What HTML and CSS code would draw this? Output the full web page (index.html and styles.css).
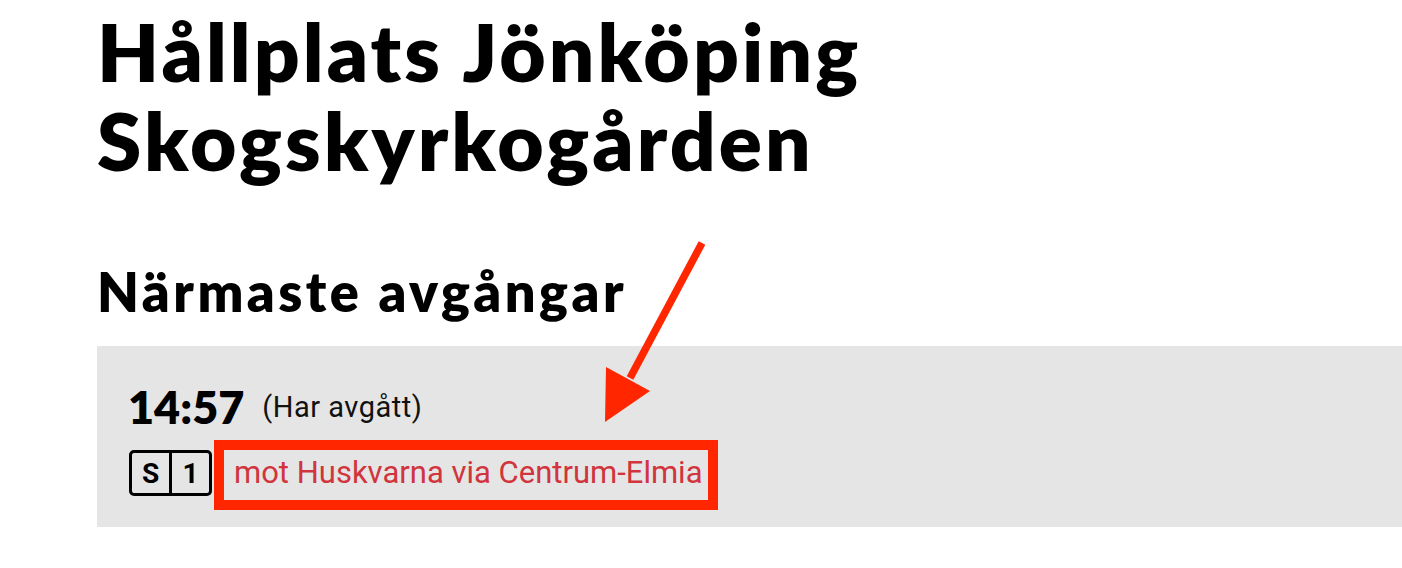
FILE: index.html
```html
<!DOCTYPE html>
<html lang="sv">
<head>
<meta charset="utf-8">
<title>Hållplats Jönköping Skogskyrkogården</title>
<link rel="stylesheet" href="styles.css">
</head>
<body>
<main class="page">
  <h1 class="title">Hållplats Jönköping<br>Skogskyrkogården</h1>
  <h2 class="subtitle">Närmaste avgångar</h2>
  <section class="departure">
    <div class="departure-time">
      <span class="time">14:57</span>
      <span class="status">(Har avgått)</span>
    </div>
    <div class="departure-line">
      <span class="badge"><span class="badge-cell">S</span><span class="badge-cell">1</span></span>
      <a class="destination" href="#">mot Huskvarna via Centrum-Elmia</a>
    </div>
    <span class="highlight"></span>
  </section>
</main>
<svg class="arrow" width="1402" height="568" viewBox="0 0 1402 568" aria-hidden="true">
  <line x1="702" y1="243" x2="630" y2="378" stroke="#ff2600" stroke-width="7.5"/>
  <polygon points="606,367 650,391 605,422" fill="#ff2600"/>
</svg>
</body>
</html>
```

FILE: styles.css
```css
html, body {
  margin: 0;
  padding: 0;
  background: #ffffff;
}

body {
  position: relative;
  width: 1402px;
  height: 568px;
  overflow: hidden;
  font-family: "Lato", "Liberation Sans", sans-serif;
  color: #000;
}

.page {
  padding-left: 97px;
}

.title {
  margin: 7px 0 0 0;
  font-family: "Lato", sans-serif;
  font-weight: 800;
  font-size: 80px;
  line-height: 89px;
  letter-spacing: 3.1px;
  color: #000;
}

.subtitle {
  margin: 77px 0 0 0;
  font-family: "Lato", sans-serif;
  font-weight: 800;
  font-size: 54px;
  line-height: 60px;
  letter-spacing: 3.5px;
  color: #000;
}

.departure {
  position: relative;
  margin-top: 24px;
  background: #e5e5e5;
  padding: 38px 33px 31px 33px;
  height: 181px;
  box-sizing: border-box;
}

.departure-time {
  display: flex;
  align-items: center;
  height: 46px;
}

.time {
  margin-left: -2px;
  font-family: "Lato", sans-serif;
  font-weight: 800;
  font-size: 45px;
  line-height: 46px;
}

.status {
  margin-left: 18px;
  font-family: "Roboto", sans-serif;
  font-size: 29px;
  line-height: 34px;
  letter-spacing: 0.5px;
  color: #111;
}

.departure-line {
  display: flex;
  align-items: center;
  margin-top: 20px;
  height: 46px;
}

.badge {
  display: flex;
  margin-left: -1px;
  border: 3px solid #000;
  border-radius: 5px;
  height: 46px;
  box-sizing: border-box;
}

.badge-cell {
  width: 37px;
  display: flex;
  align-items: center;
  justify-content: center;
  font-family: "Roboto", sans-serif;
  font-weight: 700;
  font-size: 28px;
}

.badge-cell + .badge-cell {
  border-left: 3px solid #000;
}

.destination {
  margin-left: 22px;
  font-family: "Roboto", sans-serif;
  font-size: 31px;
  line-height: 36px;
  color: #d1343c;
  text-decoration: none;
}

.highlight {
  position: absolute;
  left: 117px;
  top: 94px;
  width: 504px;
  height: 70px;
  box-sizing: border-box;
  border: 10px solid #ff2600;
  pointer-events: none;
}

.arrow {
  position: absolute;
  left: 0;
  top: 0;
  pointer-events: none;
}
```
